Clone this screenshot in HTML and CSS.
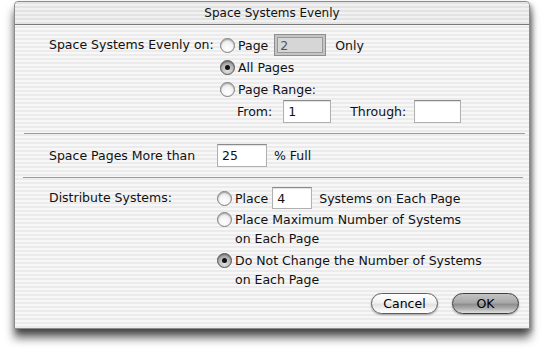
FILE: index.html
```html
<!DOCTYPE html>
<html lang="en">
<head>
  <meta charset="UTF-8" />
  <title>Space Systems Evenly</title>
  <link rel="stylesheet" href="styles.css">
</head>
<body>
  <div class="window">
    <div class="titlebar">Space Systems Evenly</div>

    <div class="content">
      <div class="section first">
        <div class="label right">Space Systems Evenly on:</div>
        <div class="options shift">
          <div class="row">
            <span class="radio"></span>
            <span>Page</span>
            <span class="field disabled page-field">2</span>
            <span class="only">Only</span>
          </div>
          <div class="row"><span class="radio on"></span><span>All Pages</span></div>
          <div class="row"><span class="radio"></span><span>Page Range:</span></div>
          <div class="row range">
            <span class="from">From:</span>
            <span class="field from-field">1</span>
            <span class="through">Through:</span>
            <span class="field through-field"></span>
          </div>
        </div>
      </div>

      <div class="sep"></div>

      <div class="section second">
        <div class="label">Space Pages More than</div>
        <div class="options">
          <div class="row tall">
            <span class="field pct-field">25</span>
            <span class="full">% Full</span>
          </div>
        </div>
      </div>

      <div class="sep lower"></div>

      <div class="section third">
        <div class="label">Distribute Systems:</div>
        <div class="options">
          <div class="row">
            <span class="radio"></span>
            <span>Place</span>
            <span class="field count-field">4</span>
            <span class="per-page">Systems on Each Page</span>
          </div>
          <div class="item first-item">
            <span class="radio"></span>
            <span class="text">Place Maximum Number of Systems<br>on Each Page</span>
          </div>
          <div class="item">
            <span class="radio on"></span>
            <span class="text">Do Not Change the Number of Systems<br>on Each Page</span>
          </div>
        </div>
      </div>

      <div class="buttons">
        <button class="btn">Cancel</button>
        <button class="btn default">OK</button>
      </div>
    </div>
  </div>
</body>
</html>
```

FILE: styles.css
```css
* {
  box-sizing: border-box;
  margin: 0;
  padding: 0;
}

html, body {
  background: #ffffff;
  font-family: "DejaVu Sans", "Liberation Sans", sans-serif;
  font-size: 12.5px;
  color: #111111;
}

body {
  min-height: 100vh;
  padding: 1px 0 0 14px;
}

.window {
  width: 516px;
  height: 328px;
  border: 1px solid #8c8c8c;
  border-radius: 4px 4px 0 0;
  background: repeating-linear-gradient(to bottom, #ebebeb 0, #ebebeb 2px, #f7f7f7 2px, #f7f7f7 4px);
  box-shadow: 0 9px 10px rgba(0, 0, 0, 0.6), 2px 3px 5px rgba(0, 0, 0, 0.35);
}

/* Title bar */
.titlebar {
  height: 23px;
  line-height: 22px;
  font-size: 12px;
  text-align: center;
  border-bottom: 1px solid #7a7a7a;
  border-radius: 4px 4px 0 0;
  background: repeating-linear-gradient(to bottom, #e3e3e3 0, #e3e3e3 2px, #f1f1f1 2px, #f1f1f1 4px);
}

.content {
  padding: 9px 4px 0 9px;
}

.section {
  display: grid;
  grid-template-columns: 168px 1fr;
  padding-left: 25px;
}

.label {
  line-height: 22px;
  white-space: nowrap;
}

.label.right {
  text-align: right;
  padding-right: 4px;
}

.second .label {
  line-height: 23px;
}

.options.shift {
  margin-left: 3px;
}

.row {
  display: flex;
  align-items: center;
  height: 22px;
  white-space: nowrap;
}

.row.tall {
  height: 23px;
}

.sep {
  border-top: 1px solid #9c9c9c;
  margin: 11px 0 10px 0;
}

.sep.lower {
  margin: 10px 2px 9px -1px;
}

/* Radio buttons */
.radio {
  width: 15px;
  height: 15px;
  border-radius: 50%;
  border: 1px solid #7d7d7d;
  background: radial-gradient(circle at 50% 70%, #ffffff 0, #f4f4f4 45%, #cfcfcf 100%);
  box-shadow: inset 0 1px 1px rgba(0, 0, 0, 0.25);
  margin-right: 3px;
  flex-shrink: 0;
  position: relative;
}

.radio.on {
  background: radial-gradient(circle at 50% 75%, #e2e2e2 0, #b8b8b8 50%, #7c7c7c 100%);
  border-color: #555555;
}

.radio.on::after {
  content: "";
  position: absolute;
  left: 4px;
  top: 4px;
  width: 5px;
  height: 5px;
  border-radius: 50%;
  background: #111111;
}

/* Text fields */
.field {
  display: inline-block;
  height: 23px;
  line-height: 21px;
  padding-left: 4px;
  background: #ffffff;
  border: 1px solid #b0b0b0;
  border-top-color: #8a8a8a;
  box-shadow: inset 0 1px 1px rgba(0, 0, 0, 0.12);
  flex-shrink: 0;
}

.field.disabled {
  background: #d6d6d6;
  border: 1px solid #8e8e8e;
  box-shadow: inset 0 0 0 2px #c4c4c4, inset 0 0 0 3px #9a9a9a;
  padding-left: 5px;
  color: #555555;
}

.page-field {
  width: 52px;
  height: 22px;
  margin-left: 6px;
}

.only {
  margin-left: 9px;
}

.range .from {
  margin-left: 17px;
}

.from-field {
  width: 48px;
  margin-left: 11px;
}

.through {
  margin-left: 19px;
}

.through-field {
  width: 47px;
  margin-left: 8px;
}

.pct-field {
  width: 50px;
}

.full {
  margin-left: 7px;
}

.count-field {
  width: 40px;
  height: 22px;
  margin-left: 4px;
}

.per-page {
  margin-left: 7px;
}

.item {
  display: flex;
  align-items: flex-start;
  line-height: 19px;
  margin-top: 3px;
  white-space: nowrap;
}

.item.first-item {
  margin-top: 1px;
}

.item .radio {
  margin-top: 2px;
}

/* Buttons */
.buttons {
  display: flex;
  justify-content: flex-end;
  gap: 14px;
  margin-top: 4px;
  padding-right: 6px;
}

.btn {
  width: 67px;
  height: 21px;
  border-radius: 11px;
  border: 1px solid #5f5f5f;
  font-family: "DejaVu Sans", "Liberation Sans", sans-serif;
  font-size: 12.5px;
  color: #000000;
  background: linear-gradient(to bottom, #ffffff 0%, #f2f2f2 45%, #e2e2e2 55%, #f6f6f6 85%, #ffffff 100%);
  box-shadow: 0 1px 2px rgba(0, 0, 0, 0.35);
}

.btn.default {
  border-color: #3f3f3f;
  background: linear-gradient(to bottom, #c4c4c4 0%, #a8a8a8 45%, #8e8e8e 55%, #b4b4b4 80%, #e0e0e0 100%);
}
```
